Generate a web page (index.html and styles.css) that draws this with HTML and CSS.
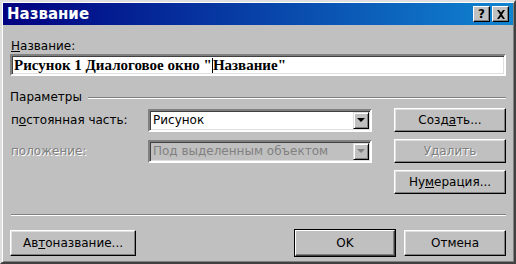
FILE: index.html
```html
<!DOCTYPE html>
<html lang="ru">
<head>
<meta charset="utf-8">
<link rel="stylesheet" href="styles.css">
</head>
<body>
<div class="window">
  <div class="titlebar">
    <span class="title">Название</span>
    <div class="tbtns">
      <div class="tbtn"><span class="q">?</span></div>
      <div class="tbtn">
        <svg width="10" height="9" viewBox="0 0 10 9"><path d="M1 0h2l2 2.5L7 0h2L6 4.5 9 9H7L5 6.5 3 9H1l3-4.5z" fill="#000"/></svg>
      </div>
    </div>
  </div>
  <div class="content">
    <div class="lbl"><u>Н</u>азвание:</div>
    <div class="textbox"><span class="captext">Рисунок 1 Диалоговое окно "<span class="caret"></span>Название"</span></div>
    <div class="group"><span>Параметры</span><div class="gline"></div></div>
    <div class="grid">
      <div class="rlbl c1">п<u>о</u>стоянная часть:</div>
      <div class="combo c2"><span class="ctext">Рисунок</span><div class="arrow"><span class="tri"></span></div></div>
      <div class="btn c4">Созд<u>а</u>ть...</div>

      <div class="rlbl dis c1">положение:</div>
      <div class="combo disc c2"><span class="ctext">Под выделенным объектом</span><div class="arrow"><span class="tri"></span></div></div>
      <div class="btn dis c4">Удалить</div>

      <div class="btn c4">Ну<u>м</u>ерация...</div>
    </div>
    <div class="sep"></div>
    <div class="bottom">
      <div class="btn auto">Ав<u>т</u>оназвание...</div>
      <div class="spacer"></div>
      <div class="btn ok">OK</div>
      <div class="btn cancel">Отмена</div>
    </div>
  </div>
</div>
</body>
</html>
```

FILE: styles.css
```css
html, body {
  margin: 0;
  padding: 0;
  background: #c0c0c0;
}
body {
  font-family: "DejaVu Sans", sans-serif;
  font-size: 12px;
  color: #000;
}
.window {
  box-sizing: border-box;
  width: 516px;
  height: 264px;
  background: #c0c0c0;
  border: 2px solid;
  border-color: #dfdfdf #404040 #404040 #dfdfdf;
  box-shadow: inset 1px 1px 0 #fff, inset -1px -1px 0 #808080;
  padding: 1px;
}
.titlebar {
  height: 22px;
  background: linear-gradient(to right, #000080, #1084d0);
  display: flex;
  align-items: center;
  justify-content: space-between;
  padding: 0 4px 0 4px;
}
.title {
  color: #fff;
  font-weight: bold;
  font-size: 15px;
}
.tbtns {
  display: flex;
  gap: 2px;
}
.tbtn {
  box-sizing: border-box;
  width: 17px;
  height: 16px;
  background: #c0c0c0;
  border: 1px solid;
  border-color: #fff #000 #000 #fff;
  box-shadow: inset -1px -1px 0 #808080;
  display: flex;
  align-items: center;
  justify-content: center;
}
.q {
  font-weight: bold;
  font-size: 12px;
  line-height: 12px;
}
.content {
  padding: 13px 7px 0 7px;
}
.lbl {
  line-height: 16px;
  padding-left: 1px;
}
u { text-decoration: underline; text-underline-offset: 1px; }
.textbox {
  box-sizing: border-box;
  height: 22px;
  background: #fff;
  border: 2px solid;
  border-color: #808080 #fff #fff #808080;
  box-shadow: inset 1px 1px 0 #404040, inset -1px -1px 0 #dfdfdf;
  display: flex;
  align-items: center;
  padding-left: 2px;
}
.captext {
  font-family: "Liberation Serif", serif;
  font-weight: bold;
  font-size: 15px;
}
.caret {
  display: inline-block;
  width: 1px;
  height: 15px;
  background: #000;
  vertical-align: -3px;
}
.group {
  display: flex;
  align-items: center;
  margin-top: 13px;
  line-height: 16px;
  gap: 6px;
}
.gline {
  flex: 1;
  height: 0;
  border-top: 1px solid #808080;
  border-bottom: 1px solid #fff;
  margin-top: 1px;
}
.grid {
  display: grid;
  grid-template-columns: 138px 224px 22px 1fr;
  row-gap: 7px;
  margin-top: 3px;
  align-items: center;
}
.c1 { grid-column: 1; }
.c2 { grid-column: 2; }
.c4 { grid-column: 4; }
.rlbl {
  padding-left: 1px;
}
.dis {
  color: #808080;
  text-shadow: 1px 1px 0 #fff;
}
.combo {
  box-sizing: border-box;
  height: 23px;
  background: #fff;
  border: 2px solid;
  border-color: #808080 #fff #fff #808080;
  box-shadow: inset 1px 1px 0 #404040, inset -1px -1px 0 #dfdfdf;
  display: flex;
  align-items: center;
  justify-content: space-between;
  padding: 1px;
}
.disc {
  background: #c0c0c0;
  color: #808080;
}
.ctext { padding-left: 2px; }
.arrow {
  box-sizing: border-box;
  width: 16px;
  height: 17px;
  background: #c0c0c0;
  border: 1px solid;
  border-color: #dfdfdf #000 #000 #dfdfdf;
  box-shadow: inset 1px 1px 0 #fff, inset -1px -1px 0 #808080;
  display: flex;
  align-items: center;
  justify-content: center;
}
.tri {
  width: 0;
  height: 0;
  border-left: 4px solid transparent;
  border-right: 4px solid transparent;
  border-top: 4px solid #000;
}
.disc .tri {
  border-top-color: #808080;
}
.btn {
  box-sizing: border-box;
  height: 24px;
  background: #c0c0c0;
  border: 1px solid;
  border-color: #fff #000 #000 #fff;
  box-shadow: inset -1px -1px 0 #808080, inset 1px 1px 0 #dfdfdf;
  display: flex;
  align-items: center;
  justify-content: center;
}
.sep {
  margin-top: 20px;
  border-top: 1px solid #808080;
  border-bottom: 1px solid #fff;
  margin-left: 1px;
}
.bottom {
  display: flex;
  margin-top: 14px;
  gap: 9px;
}
.bottom .btn {
  height: 26px;
}
.auto { width: 126px; }
.spacer { flex: 1; }
.ok {
  width: 100px;
  border-color: #fff #404040 #404040 #fff;
  box-shadow: inset -1px -1px 0 #808080, 0 0 0 1px #000;
}
.cancel { width: 102px; }
```
